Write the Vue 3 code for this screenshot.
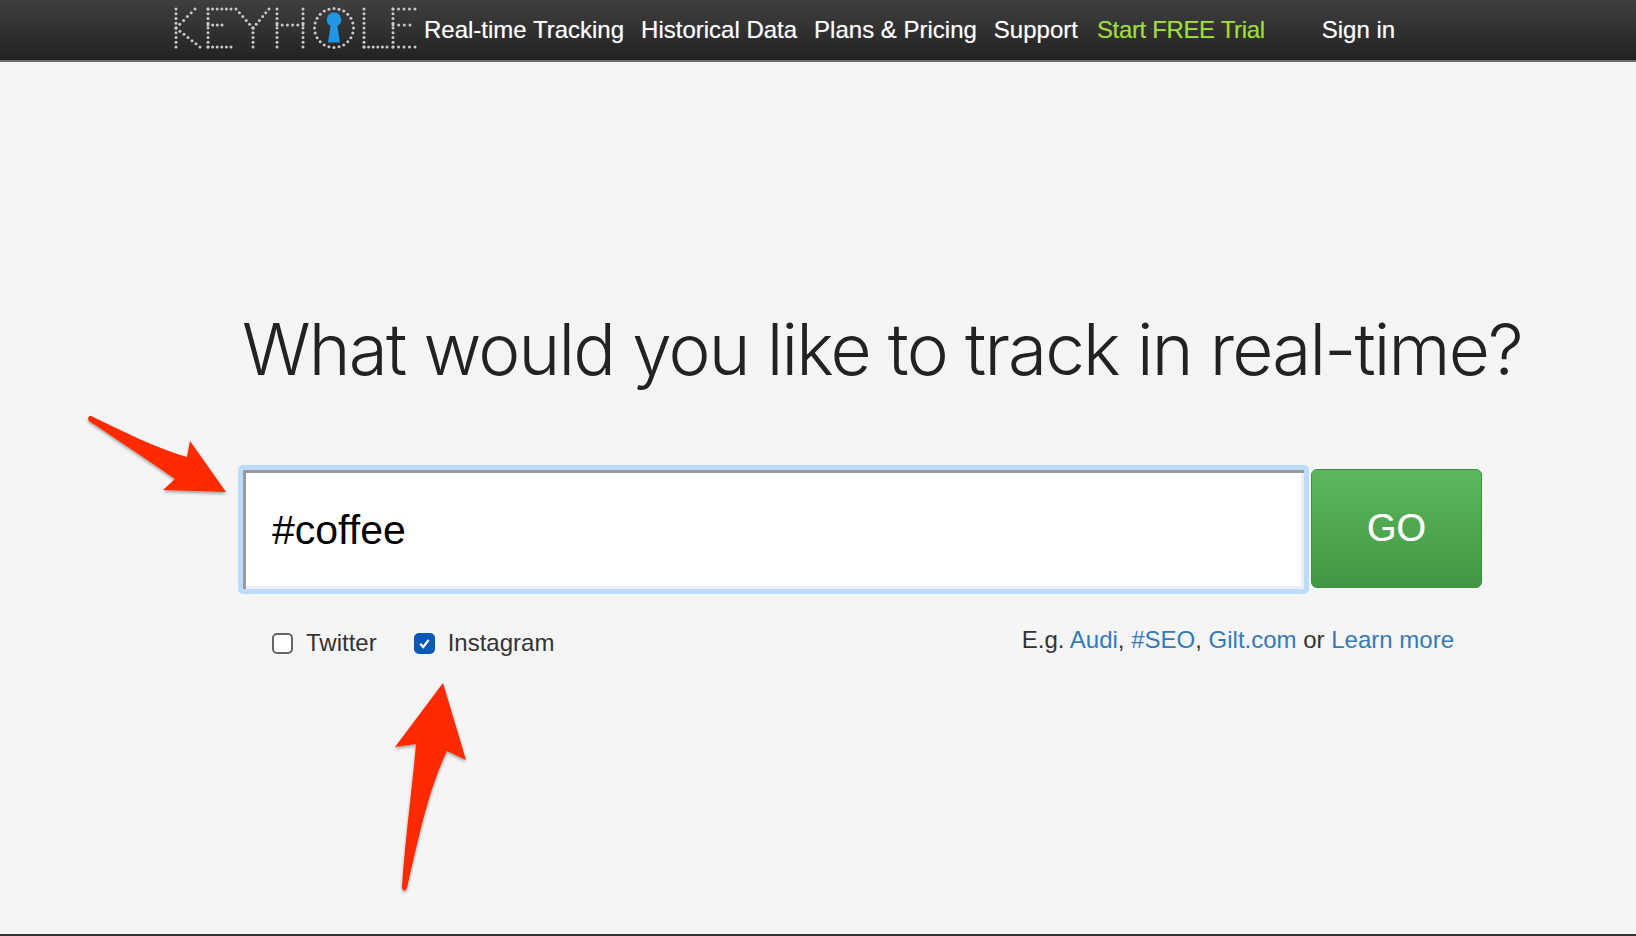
<script setup>
import { computed } from 'vue'

const navLinks = ['Real-time Tracking', 'Historical Data', 'Plans & Pricing', 'Support']

function line(x1, y1, x2, y2) {
  const n = Math.max(1, Math.round(Math.hypot(x2 - x1, y2 - y1) / 5))
  return Array.from({ length: n + 1 }, (_, i) => ({
    x: x1 + ((x2 - x1) * i) / n,
    y: y1 + ((y2 - y1) * i) / n,
  }))
}
function ring(cx, cy, r) {
  const n = 24
  return Array.from({ length: n }, (_, i) => ({
    x: cx + r * Math.cos((i / n) * Math.PI * 2),
    y: cy + r * Math.sin((i / n) * Math.PI * 2),
  }))
}
const dots = computed(() => [
  ...line(16, 9, 16, 47), ...line(16, 28, 35, 9), ...line(16, 28, 40, 47),
  ...line(48, 9, 48, 47), ...line(48, 9, 71, 9), ...line(48, 25, 62, 25), ...line(48, 47, 71, 47),
  ...line(76, 9, 93, 28), ...line(109, 9, 93, 28), ...line(93, 28, 93, 47),
  ...line(117, 9, 117, 47), ...line(143, 9, 143, 47), ...line(117, 25, 143, 25),
  ...ring(174, 28, 19.5),
  ...line(204, 9, 204, 47), ...line(204, 47, 227, 47),
  ...line(233, 9, 233, 47), ...line(233, 9, 255, 9), ...line(233, 25, 250, 25), ...line(233, 47, 255, 47),
])
</script>

<template>
  <div class="page">
    <header class="topbar">
      <svg class="logo" width="260" height="56" viewBox="0 0 260 56" role="img" aria-label="Keyhole">
        <circle v-for="(d, i) in dots" :key="i" :cx="d.x" :cy="d.y" r="1.5" fill="#c8c8c8" />
        <path d="M174 12.5a7.2 7.2 0 0 1 3.4 13.5l2.6 16.500h-12l2.600-16.500A7.200 7.200 0 0 1 174 12.500z" fill="#2196e3" />
      </svg>
      <nav class="nav">
        <a v-for="link in navLinks" :key="link" class="nav-link">{{ link }}</a>
        <a class="nav-link trial">Start FREE Trial</a>
        <a class="nav-link signin">Sign in</a>
      </nav>
    </header>

    <main class="main">
      <h1 class="title">What would you like to track in real-time?</h1>
      <div class="search">
        <input class="field" type="text" value="#coffee" readonly />
        <button class="go" type="button">GO</button>
      </div>
      <div class="options">
        <div class="sources">
          <label class="source">
            <span class="box"></span>
            Twitter
          </label>
          <label class="source">
            <span class="box checked">
              <svg width="15" height="15" viewBox="0 0 15 15"><path d="M3.200 7.800l3 3.200 5.500-7.200" fill="none" stroke="#fff" stroke-width="2.200" /></svg>
            </span>
            Instagram
          </label>
        </div>
        <p class="examples">E.g. <a>Audi</a>, <a>#SEO</a>, <a>Gilt.com</a> or <a>Learn more</a></p>
      </div>
    </main>

    <svg class="arrows" width="1636" height="936" viewBox="0 0 1636 936" aria-hidden="true">
      <defs>
        <filter id="arrowShadow" x="-20%" y="-20%" width="140%" height="140%">
          <feDropShadow dx="0" dy="2" stdDeviation="1.500" flood-color="#000" flood-opacity="0.35" />
        </filter>
      </defs>
      <g fill="#ff2a00" filter="url(#arrowShadow)">
        <path d="M92 416.500C122 431 158 449 187 457L190 441L226 492L163 490L175 479C146 459 116 439 89 421C87 418 89 415 92 416.500z" />
        <path d="M443 683L466 760L447 751C428 790 417 845 407 888C405 892 402 891 402 887C405 840 412 790 416 744L395 747z" />
      </g>
    </svg>
  </div>
</template>

<style>
html, body { margin: 0; background: #f5f5f5; }
</style>

<style scoped>
.page {
  position: relative;
  box-sizing: border-box;
  height: 936px;
  overflow: hidden;
  background: #f5f5f5;
  border-bottom: 2px solid #333;
  font-family: "Liberation Sans", Arial, sans-serif;
  color: #333;
}
.topbar {
  box-sizing: border-box;
  height: 62px;
  display: flex;
  align-items: center;
  padding-left: 160px;
  background: linear-gradient(#3f3f3f, #222);
  border-bottom: 2px solid #6a6a6a;
}
.logo { flex: none; margin: 0 4px 4px 0; }
.nav { display: flex; align-items: center; gap: 17px; }
.nav-link {
  font-size: 24px;
  color: #fff;
  text-shadow: 0 0 1px rgba(255, 255, 255, 0.45);
}
.trial { margin-left: 2px; color: #9fdc3c; letter-spacing: -0.35px; text-shadow: 0 0 1px rgba(159, 220, 60, 0.45); }
.signin { margin-left: 40px; }
.main { padding: 0 0 0 238px; }
.title {
  margin: 242px 0 0 4px;
  font-family: Inter, "Liberation Sans", sans-serif;
  font-size: 71px;
  letter-spacing: -1.830px;
  line-height: 90px;
  font-weight: 300;
  color: #222;
  white-space: nowrap;
}
.search {
  display: flex;
  align-items: center;
  gap: 2px;
  margin-top: 71px;
}
.field {
  box-sizing: border-box;
  width: 1071px;
  height: 129px;
  padding: 2px 0 0 29px;
  border: 5px solid #bcdcfb;
  border-radius: 5px;
  outline: none;
  background: #fff;
  box-shadow: inset 3px 3px 0 #999, inset -3px -3px 0 #eee;
  font-family: "Liberation Sans", Arial, sans-serif;
  font-size: 41px;
  color: #000;
}
.go {
  width: 171px;
  height: 119px;
  margin-bottom: 2px;
  padding: 0;
  border: 1px solid #3f8f3f;
  border-radius: 6px;
  background: linear-gradient(#5cb85c, #419641);
  color: #fff;
  font-family: "Liberation Sans", Arial, sans-serif;
  font-size: 38px;
  text-shadow: 0 0 1px rgba(255, 255, 255, 0.5);
}
.options {
  display: flex;
  align-items: center;
  justify-content: space-between;
  width: 1216px;
  margin-top: 35px;
  padding-left: 34px;
  box-sizing: border-box;
}
.sources { display: flex; gap: 37px; }
.source { display: flex; align-items: center; gap: 13px; font-size: 24px; }
.box {
  box-sizing: border-box;
  width: 21px;
  height: 21px;
  display: flex;
  align-items: center;
  justify-content: center;
  border: 2px solid #666;
  border-radius: 5px;
  background: #fff;
}
.checked { background: #0b57b5; border-color: #0b57b5; }
.examples { margin: -6px 0 0; font-size: 24px; }
.examples a { color: #337ab7; }
.arrows { position: absolute; left: 0; top: 0; pointer-events: none; }
</style>
